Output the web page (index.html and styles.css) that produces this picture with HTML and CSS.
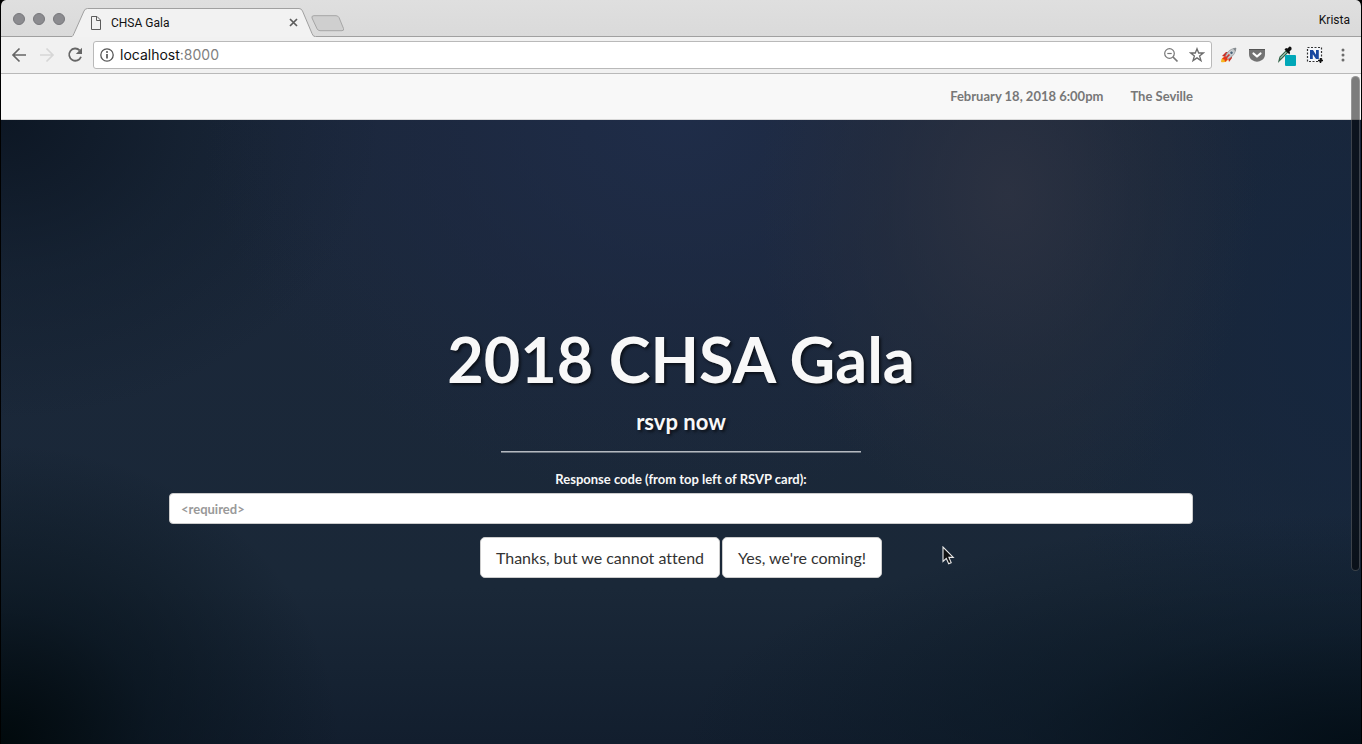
FILE: index.html
```html
<!DOCTYPE html>
<html lang="en">
<head>
<meta charset="utf-8">
<meta name="viewport" content="width=device-width, initial-scale=1">
<title>CHSA Gala</title>
<link rel="stylesheet" href="styles.css">
</head>
<body>
<div class="window">
  <div class="tab-strip">
    <div class="lights">
      <button class="light" aria-label="Close window"></button>
      <button class="light" aria-label="Minimize window"></button>
      <button class="light" aria-label="Zoom window"></button>
    </div>
    <div class="tab">
      <svg class="tab-shape" width="244" height="29" viewBox="0 0 244 29" aria-hidden="true">
        <path d="M0 29V28.5Q1 28 2 25.500L12 3Q13 .5 15.500 .5H227Q229.500 .5 230.500 3L240 25.500Q241 28.500 243 28.500L244 29Z" fill="#f2f2f2"/>
        <path d="M0 28.500Q1 28 2 25.500L12 3Q13 .5 15.500 .5H227Q229.500 .5 230.500 3L240 25.500Q241 28.500 243 28.500" fill="none" stroke="#a0a0a0"/>
      </svg>
      <svg class="tab-page" width="12" height="14" viewBox="0 0 12 14" fill="none" stroke="#5c5c5c" aria-hidden="true">
        <path d="M1.500 .5H7L10.500 4V13.500H1.500ZM6.500 .5V4.500H10.500"/>
      </svg>
      <span class="tab-title">CHSA Gala</span>
      <button class="tab-close" aria-label="Close tab">
        <svg width="9" height="9" viewBox="0 0 9 9" stroke="#5c5c5c" stroke-width="1.700"><path d="M1 1L8 8M8 1L1 8"/></svg>
      </button>
    </div>
    <button class="new-tab" aria-label="New tab">
      <svg width="34" height="17" viewBox="0 0 34 17"><path d="M3 .7H25Q27 .7 28 2.500L32.500 13.500Q33.200 15.700 31 15.700H9Q7 15.700 6 13.700L1 3Q.3 .7 3 .7Z" fill="#cfcfcf" stroke="#a6a6a6"/></svg>
    </button>
    <span class="profile">Krista</span>
  </div>

  <div class="toolbar">
    <div class="nav-buttons">
      <button class="icon" aria-label="Back">
        <svg width="16" height="16" viewBox="0 0 16 16" fill="none" stroke="#666" stroke-width="1.700"><path d="M15 8H2.500M8.500 1.500L2 8L8.500 14.500"/></svg>
      </button>
      <button class="icon" aria-label="Forward" disabled>
        <svg width="16" height="16" viewBox="0 0 16 16" fill="none" stroke="#d6d6d6" stroke-width="1.700"><path d="M1 8H13.500M7.500 1.500L14 8L7.500 14.500"/></svg>
      </button>
      <button class="icon" aria-label="Reload">
        <svg width="16" height="16" viewBox="0 0 16 16"><path d="M12.600 3.300A6.100 6.100 0 1 0 14 9.700" fill="none" stroke="#666" stroke-width="1.800"/><path d="M15 .8V7H8.800Z" fill="#666"/></svg>
      </button>
    </div>
    <div class="address">
      <svg width="14" height="14" viewBox="0 0 14 14" aria-hidden="true"><circle cx="7" cy="7" r="6.200" fill="none" stroke="#555" stroke-width="1.300"/><path d="M7 6V10.500" stroke="#555" stroke-width="1.700"/><circle cx="7" cy="4" r="1" fill="#555"/></svg>
      <a class="url" href="#top">localhost<span class="port">:8000</span></a>
      <button class="icon" aria-label="Zoom out">
        <svg width="16" height="16" viewBox="0 0 16 16" fill="none" stroke="#777" stroke-width="1.200"><circle cx="6.500" cy="6.500" r="4.800"/><path d="M4.300 6.500H8.700"/><path d="M10 10L14.500 14.500" stroke-width="1.700"/></svg>
      </button>
      <button class="icon" aria-label="Bookmark this page">
        <svg width="16" height="16" viewBox="0 0 16 16" fill="none" stroke="#6c6c6c" stroke-width="1.300"><path d="M8 1.700L9.700 6H14.200L10.600 8.900L12 13.600L8 10.900L4 13.600L5.400 8.900L1.800 6H6.300Z"/></svg>
      </button>
    </div>
    <div class="extensions">
      <button class="icon" aria-label="Rocket">
        <svg width="18" height="18" viewBox="0 0 18 18"><path d="M2 10L6 6L9 6L6 11ZM8 12L12 9V12L9 16Z" fill="#c92f25"/><path d="M1 16Q1 11 5 11L8 13Q7 17 1 16Z" fill="#f5b51e"/><path d="M2 13L5 10L8 13L5 16L4.500 13.500Z" fill="#e8321d"/><path d="M5.500 10Q8 3 16 2Q15.500 9 8.500 13Z" fill="#c3c7ca" stroke="#8c9297" stroke-width=".7"/><path d="M13 2.500L16 2L15.500 5.500Z" fill="#80868b"/><circle cx="11.500" cy="6.800" r="1.700" fill="#4a6378" stroke="#eef0f1" stroke-width=".6"/><path d="M6 12L9.500 8.500" stroke="#d2362d" stroke-width="1.700"/></svg>
      </button>
      <button class="icon" aria-label="Save to Pocket">
        <svg width="18" height="18" viewBox="0 0 18 18"><path d="M1.500 3H16.500Q17 3 17 4V8Q17 12 14 14Q9 17.500 4 14Q1 12 1 8V4Q1 3 1.500 3Z" fill="#737373"/><path d="M1 3.500H17" stroke="#555"/><path d="M5.500 7.500L9 10.500L12.500 7.500" fill="none" stroke="#fff" stroke-width="2.200" stroke-linecap="round" stroke-linejoin="round"/></svg>
      </button>
      <button class="icon" aria-label="Color picker">
        <svg width="20" height="22" viewBox="0 0 20 22"><path d="M3 17L4 13L10 7L11.500 8.500L5.500 14.500Z" fill="#cfe2d5" stroke="#34664c" stroke-width="1.200"/><path d="M8.500 5.500L13.500 10.500L14 8.500L13.500 7.500L15.500 5.500Q16 2.500 13.500 2.500L11.500 4.500L10 4Z" fill="#111"/><rect x="9" y="11" width="11" height="11" rx="1" fill="#00a7b8"/></svg>
      </button>
      <button class="icon" aria-label="Clip selection">
        <svg width="18" height="18" viewBox="0 0 18 18"><rect x="1.500" y="1.500" width="14" height="14" fill="#f5f7fb" stroke="#333" stroke-width="1.200" stroke-dasharray="2 1.500"/><path d="M4 4H7L10 8.700V4H12.800V13H10L6.800 8.200V13H4Z" fill="#1747a0"/><path d="M12 14.500H17M14.500 12V17" stroke="#111" stroke-width="1.500"/></svg>
      </button>
      <button class="icon" aria-label="Menu">
        <svg width="18" height="18" viewBox="0 0 18 18" fill="#6c6c6c"><circle cx="9" cy="4" r="1.500"/><circle cx="9" cy="9" r="1.500"/><circle cx="9" cy="14" r="1.500"/></svg>
      </button>
    </div>
  </div>

  <div class="page" id="top">
    <header class="event-bar">
      <div class="container event-links">
        <a href="#date">February 18, 2018 6:00pm</a>
        <a href="#venue">The Seville</a>
      </div>
    </header>
    <main class="hero">
      <form class="container rsvp">
        <h1>2018 CHSA Gala</h1>
        <h3>rsvp now</h3>
        <hr>
        <label for="code">Response code (from top left of RSVP card):</label>
        <input id="code" type="text" placeholder="&lt;required&gt;" required>
        <div class="actions">
          <button type="button">Thanks, but we cannot attend</button>
          <button type="button">Yes, we're coming!</button>
        </div>
      </form>
      <svg class="pointer" width="13" height="19" viewBox="0 0 13 19" aria-hidden="true"><path d="M1 1V15.500L4.300 12.400L6.700 17.700L9.200 16.600L6.900 11.400H11.300Z" fill="#111" stroke="#e8e8e8" stroke-width="1.100"/></svg>
    </main>
    <div class="scroll-thumb"></div>
  </div>
</div>
</body>
</html>
```

FILE: styles.css
```css
* { box-sizing: border-box; }

html, body { height: 100%; }

body {
  margin: 0;
  background: #000;
  font-family: Lato, "Liberation Sans", sans-serif;
  font-variant-ligatures: no-common-ligatures;
}

button {
  padding: 0;
  border: 0;
  background: none;
  font: inherit;
}

a { color: inherit; text-decoration: none; }

svg { display: block; }

.window {
  display: flex;
  flex-direction: column;
  min-height: 100%;
  border: solid #000;
  border-width: 0 1px;
  border-radius: 6px 6px 0 0;
  overflow: hidden;
}

/* Browser chrome */
.tab-strip {
  display: flex;
  align-items: flex-end;
  height: 37px;
  padding-right: 11px;
  border-bottom: 1px solid #a0a0a0;
  background: linear-gradient(#dfdfdf, #dadada);
  font: 12px/16px Roboto, sans-serif;
  color: #111;
}

.lights {
  display: flex;
  gap: 8px;
  align-self: center;
  padding: 2px 7px 0 12px;
}

.light {
  width: 12px;
  height: 12px;
  border: 1px solid #77777b;
  border-radius: 50%;
  background: #8b8b8f;
}

.tab {
  position: relative;
  display: flex;
  align-items: center;
  width: 244px;
  height: 29px;
  margin-bottom: -1px;
  padding: 0 18px;
}

.tab-shape { position: absolute; inset: 0; }

.tab-page, .tab-title, .tab-close { position: relative; }

.tab-title { flex: 1; padding-left: 9px; }

.new-tab { margin: 0 0 4px -5px; }

.profile { margin-left: auto; padding-bottom: 8px; }

.toolbar {
  display: flex;
  align-items: center;
  height: 37px;
  padding: 0 9px 0 10px;
  border-bottom: 1px solid #b9b9b9;
  background: #f1f1f1;
}

.nav-buttons { display: flex; gap: 12px; }

.address {
  display: flex;
  flex: 1;
  align-items: center;
  gap: 6px;
  height: 28px;
  margin: 0 8px 0 10px;
  padding: 0 6px;
  border: 1px solid #b9b9b9;
  border-radius: 3px;
  background: #fff;
}

.address .icon + .icon { margin-left: 4px; }

.url {
  flex: 1;
  font: 14px/20px Inter, sans-serif;
  color: #111;
}

.port { color: #808080; }

.extensions { display: flex; align-items: center; gap: 10px; }

/* Page */
.page {
  position: relative;
  display: flex;
  flex: 1;
  flex-direction: column;
}

.container { width: 100%; max-width: 1024px; margin: 0 auto; }

.event-bar {
  border-bottom: 1px solid #d8d8d8;
  background: #f8f8f8;
}

.event-links {
  display: flex;
  justify-content: flex-end;
  gap: 27px;
  padding: 12px 0 13px;
  font-size: 13px;
  font-weight: 700;
  line-height: 20px;
  color: #777;
}

.hero {
  position: relative;
  flex: 1;
  padding: 204px 16px 0;
  text-align: center;
  color: #f8f8f8;
  background:
    radial-gradient(ellipse 250px 330px at 74% 12%, rgba(46, 51, 66, .85), rgba(40, 47, 62, .5) 50%, transparent),
    radial-gradient(ellipse 480px 380px at 50% 0%, rgba(32, 46, 76, .8), rgba(30, 42, 70, .5) 50%, transparent),
    radial-gradient(ellipse 380px 300px at 0% 0%, rgba(12, 22, 35, .95), rgba(16, 28, 42, .5) 50%, transparent),
    radial-gradient(ellipse 340px 300px at 0% 100%, rgba(1, 9, 12, 1), rgba(6, 17, 25, .6) 45%, transparent),
    radial-gradient(ellipse 680px 230px at 100% 100%, rgba(3, 14, 22, .95), rgba(8, 22, 33, .5) 50%, transparent),
    radial-gradient(ellipse 320px 420px at 100% 35%, rgba(20, 38, 64, .75), transparent),
    linear-gradient(#1b273a, #1a2838 75%, #121e2e);
}

.rsvp h1 {
  margin: 0;
  font-size: 63px;
  line-height: 70px;
  text-shadow: 2px 2px 3px rgba(0, 0, 0, .6);
}

.rsvp h3 {
  margin: 16px 0 0;
  font-size: 22px;
  line-height: 24px;
  text-shadow: 2px 2px 3px rgba(0, 0, 0, .6);
}

.rsvp hr {
  width: 360px;
  max-width: 100%;
  height: 2px;
  margin: 17px auto;
  border: 0;
  border-top: 1px solid #b4b9c0;
  border-bottom: 1px solid #6d7681;
}

.rsvp label {
  display: block;
  margin-bottom: 5px;
  font-size: 13px;
  font-weight: 700;
  line-height: 18px;
}

.rsvp input {
  display: block;
  width: 100%;
  height: 31px;
  padding: 0 11px;
  border: 1px solid #ccc;
  border-radius: 4px;
  background: #fff;
  font: 700 13px/18px Lato, sans-serif;
  color: #555;
}

.rsvp input::placeholder { color: #999; opacity: 1; }

.actions {
  display: flex;
  flex-wrap: wrap;
  justify-content: center;
  gap: 2px;
  margin-top: 13px;
}

.actions button {
  padding: 9px 15px;
  border: 1px solid #ccc;
  border-radius: 5px;
  background: #fff;
  font-size: 16px;
  line-height: 21px;
  color: #333;
}

.pointer { position: absolute; left: 941px; top: 426px; }

.scroll-thumb {
  position: absolute;
  top: 2px;
  right: 1px;
  width: 9px;
  height: 495px;
  border: 1px solid rgba(255, 255, 255, .2);
  border-radius: 5px;
  background: rgba(0, 0, 0, .5);
}
```
